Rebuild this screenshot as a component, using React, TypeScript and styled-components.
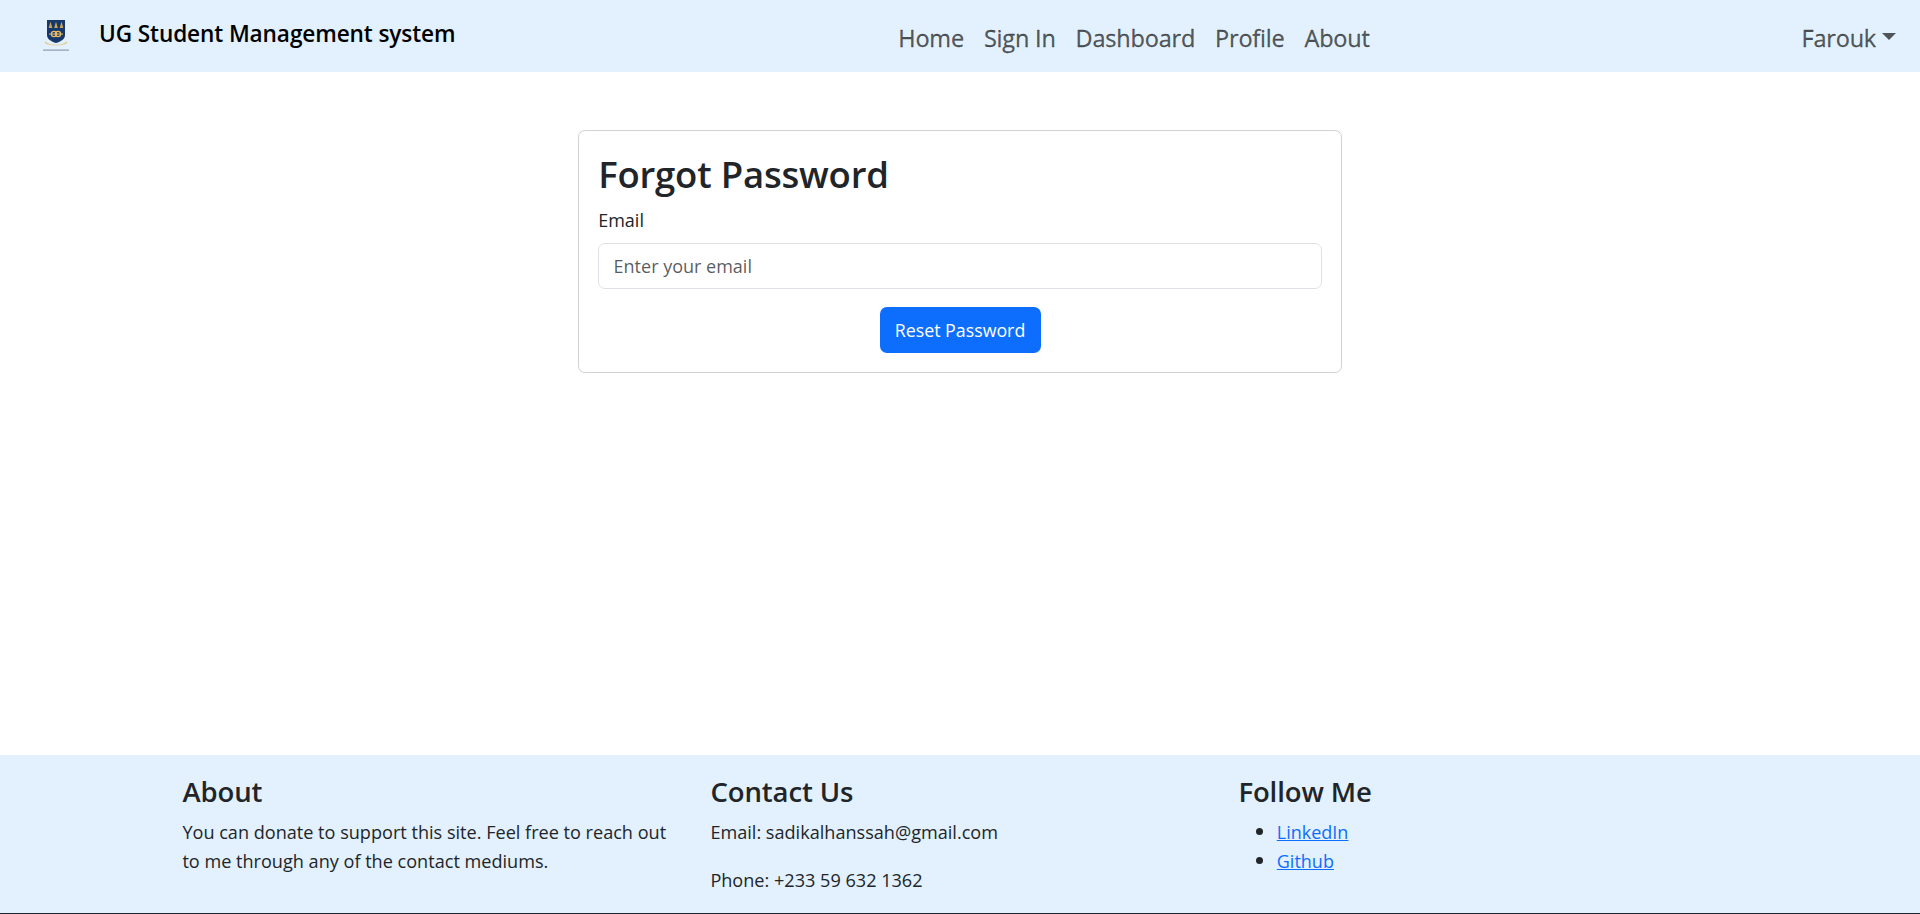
import React from "react";
import styled, { createGlobalStyle } from "styled-components";

const Global = createGlobalStyle`
  html, body { margin: 0; padding: 0; background: #fff; }
  body { font-family: "Open Sans", "Noto Sans", "Liberation Sans", sans-serif; color: #212529; }
`;

const Page = styled.div`
  height: 914px;
  display: flex;
  flex-direction: column;
  overflow: hidden;
`;

const Navbar = styled.nav`
  height: 72px;
  flex: none;
  background: #e2f1fd;
  display: grid;
  grid-template-columns: 1fr auto 1fr;
  align-items: center;
  padding: 0 24px 0 43px;
`;

const Brand = styled.a`
  display: flex;
  align-items: center;
  gap: 30px;
  color: #000;
  white-space: nowrap;
`;

const BrandName = styled.span`
  font-size: 22.6px;
  font-weight: 600;
  letter-spacing: -0.1px;
  padding-bottom: 5px;
`;

const NavLinks = styled.div`
  display: flex;
  gap: 20px;
  margin-top: 3px;
  margin-left: 329px;
`;

const NavLink = styled.a`
  font-size: 23.5px;
  color: rgba(0, 0, 0, 0.65);
  white-space: nowrap;
  letter-spacing: -0.2px;
  -webkit-text-stroke: 0.3px rgba(0, 0, 0, 0.65);
`;

const UserMenu = styled.div`
  justify-self: end;
  display: flex;
  align-items: center;
  gap: 6px;
  margin-top: 3px;
  font-size: 23.5px;
  color: rgba(0, 0, 0, 0.65);
  letter-spacing: -0.2px;
  -webkit-text-stroke: 0.3px rgba(0, 0, 0, 0.65);
`;

const Caret = styled.span`
  width: 0;
  height: 0;
  margin-top: -3px;
  border-top: 7px solid rgba(0, 0, 0, 0.65);
  border-left: 7px solid transparent;
  border-right: 7px solid transparent;
`;

const Main = styled.main`
  flex: 1;
  padding-top: 58px;
  display: flex;
  justify-content: center;
  align-items: flex-start;
`;

const Card = styled.div`
  width: 764px;
  box-sizing: border-box;
  border: 1.2px solid rgba(0, 0, 0, 0.175);
  border-radius: 7px;
  padding: 16.2px 19.2px 19.2px;
  display: flex;
  flex-direction: column;
  height: 243px;
`;

const Title = styled.h1`
  margin: 0 0 3.5px;
  font-size: 36.5px;
  line-height: 55px;
  font-weight: 600;
  letter-spacing: -0.2px;
`;

const Label = styled.label`
  font-size: 18px;
  line-height: 29px;
  margin-bottom: 8.5px;
`;

const Input = styled.input`
  display: block;
  width: 100%;
  height: 45.6px;
  box-sizing: border-box;
  border: 1.2px solid #dee2e6;
  border-radius: 7px;
  padding: 0 14.4px;
  font: inherit;
  font-size: 18px;
  margin-bottom: 18.6px;
  &::placeholder { color: rgba(33, 37, 41, 0.75); opacity: 1; }
`;

const Button = styled.button`
  align-self: center;
  height: 45.6px;
  width: 161px;
  padding: 0;
  border: 0;
  border-radius: 7px;
  background: #0d6efd;
  color: #fff;
  font: inherit;
  font-size: 17.8px;
`;

const Footer = styled.footer`
  flex: none;
  height: 159px;
  box-sizing: border-box;
  background: #e2f1fd;
  border-bottom: 1px solid #1c2530;
  padding: 16.5px 0 0 182.4px;
  display: grid;
  grid-template-columns: repeat(3, 528px);
`;

const Column = styled.div`
  padding-right: 28.8px;
`;

const Heading = styled.h3`
  margin: 0 0 6px;
  font-size: 27.5px;
  line-height: 40px;
  font-weight: 600;
  letter-spacing: -0.1px;
`;

const Text = styled.p<{ $gap?: boolean }>`
  margin: 0 0 ${(p) => (p.$gap ? "19.2px" : "0")};
  font-size: 18.1px;
  line-height: 29px;
`;

const List = styled.ul`
  margin: 0;
  padding: 0 0 0 38.4px;
  list-style: none;
  font-size: 18px;
  line-height: 29px;
`;

const ListItem = styled.li`
  display: flex;
  align-items: center;
  gap: 14px;
  margin-left: -21px;
  &::before {
    content: "";
    width: 7px;
    height: 7px;
    margin-top: -2px;
    border-radius: 50%;
    background: #212529;
  }
`;

const FooterLink = styled.a`
  color: #0d6efd;
  text-decoration: underline;
`;

const Crest = () => (
  <svg width="26" height="32" viewBox="0 0 26 32" aria-hidden="true" style={{ flex: "none" }}>
    <path d="M4 0h18v15c0 4-4 6.500-9 8C8 21.500 4 19 4 15z" fill="#17386b" />
    <path d="M7.500 1.500l1.800 6.500H5.700zM13 1.500l1.800 6.500h-3.600zM18.500 1.500l1.800 6.500h-3.600z" fill="#c9a558" />
    <circle cx="11" cy="14" r="2.600" fill="none" stroke="#e6bd68" strokeWidth="1.300" />
    <circle cx="15" cy="14" r="2.600" fill="none" stroke="#e6bd68" strokeWidth="1.300" />
    <path d="M6 14h14" stroke="#e6bd68" strokeWidth="1" />
    <path d="M2 21c3 3 7 3.500 11 3.500S21 24 24 21v2.500c-3 1.500-7 2-11 2s-8-.5-11-2z" fill="#e3cfa2" />
    <rect x="0" y="29.500" width="26" height="1.200" fill="#8e9ab0" />
  </svg>
);

export default function App() {
  return (
    <Page>
      <Global />
      <Navbar>
        <Brand>
          <Crest />
          <BrandName>UG Student Management system</BrandName>
        </Brand>
        <NavLinks>
          <NavLink>Home</NavLink>
          <NavLink>Sign In</NavLink>
          <NavLink>Dashboard</NavLink>
          <NavLink>Profile</NavLink>
          <NavLink>About</NavLink>
        </NavLinks>
        <UserMenu>
          Farouk
          <Caret />
        </UserMenu>
      </Navbar>
      <Main>
        <Card>
          <Title>Forgot Password</Title>
          <Label>Email</Label>
          <Input placeholder="Enter your email" />
          <Button>Reset Password</Button>
        </Card>
      </Main>
      <Footer>
        <Column>
          <Heading>About</Heading>
          <Text>You can donate to support this site. Feel free to reach out to me through any of the contact mediums.</Text>
        </Column>
        <Column>
          <Heading>Contact Us</Heading>
          <Text $gap>Email: sadikalhanssah@gmail.com</Text>
          <Text>Phone: +233 59 632 1362</Text>
        </Column>
        <Column>
          <Heading>Follow Me</Heading>
          <List>
            <ListItem><FooterLink>LinkedIn</FooterLink></ListItem>
            <ListItem><FooterLink>Github</FooterLink></ListItem>
          </List>
        </Column>
      </Footer>
    </Page>
  );
}
